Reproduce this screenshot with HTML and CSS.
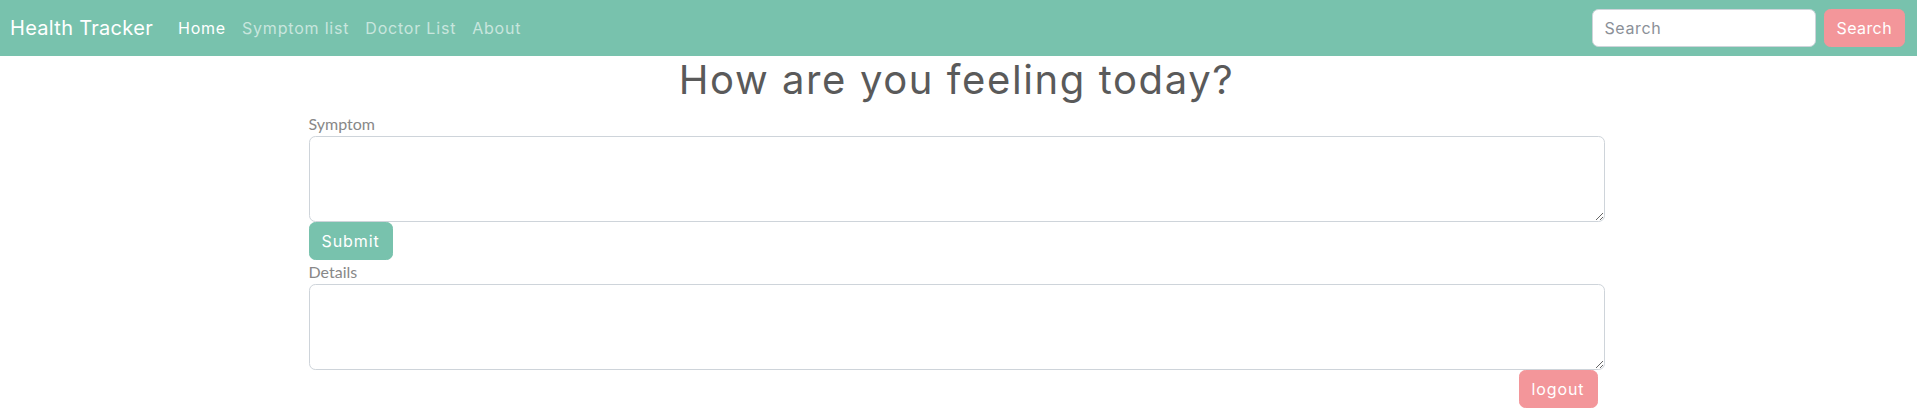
FILE: index.html
```html
<!DOCTYPE html>
<html lang="en">
<head>
<meta charset="utf-8">
<title>Health Tracker</title>
<link rel="stylesheet" href="styles.css">
</head>
<body>
<nav class="navbar">
  <a class="brand" href="#">Health Tracker</a>
  <ul class="nav-links">
    <li><a class="nav-link active" href="#">Home</a></li>
    <li><a class="nav-link" href="#">Symptom list</a></li>
    <li><a class="nav-link" href="#">Doctor List</a></li>
    <li><a class="nav-link" href="#">About</a></li>
  </ul>
  <form class="search-form">
    <input class="search-input" type="search" placeholder="Search">
    <button class="btn btn-secondary btn-search" type="button">Search</button>
  </form>
</nav>
<main class="container">
  <h1 class="title">How are you feeling today?</h1>
  <form class="entry-form">
    <label class="form-label" for="symptom">Symptom</label>
    <textarea class="form-control" id="symptom" rows="3"></textarea>
    <div class="row-start"><button class="btn btn-primary" type="button">Submit</button></div>
    <label class="form-label" for="details">Details</label>
    <textarea class="form-control" id="details" rows="3"></textarea>
    <div class="row-end"><button class="btn btn-secondary" type="button">logout</button></div>
  </form>
</main>
</body>
</html>
```
FILE: styles.css
```css
* { box-sizing: border-box; }

body {
  margin: 0;
  background: #fff;
  color: #888;
  font-family: "Lato", "Noto Sans", sans-serif;
  font-size: 16px;
  line-height: 1.5;
}

.navbar {
  display: flex;
  align-items: center;
  height: 56px;
  padding: 8px 12px 8px 10px;
  background: #78c2ad;
  font-family: "Inter", "Noto Sans", sans-serif;
}

.brand {
  color: #fff;
  font-size: 20px;
  line-height: 30px;
  letter-spacing: 0.3px;
  text-decoration: none;
  margin-right: 17px;
}

.nav-links {
  display: flex;
  list-style: none;
  margin: 0;
  padding: 0;
}

.nav-link {
  display: block;
  padding: 8px;
  font-size: 16px;
  line-height: 24px;
  letter-spacing: 0.8px;
  color: rgba(255, 255, 255, 0.6);
  text-decoration: none;
}

.nav-link.active { color: #fff; }

.search-form {
  display: flex;
  margin-left: auto;
  gap: 8px;
}

.search-input {
  width: 224px;
  height: 38px;
  padding: 6px 12px;
  border: 1px solid #ced4da;
  border-radius: 6.4px;
  font-family: "Inter", "Noto Sans", sans-serif;
  font-size: 16px;
  letter-spacing: 0.6px;
  color: #5a5a5a;
  background: #fff;
  outline: none;
}

.search-input::placeholder { color: #8b9098; }

.btn {
  display: inline-block;
  height: 38px;
  padding: 6px 12px;
  border: 1px solid transparent;
  border-radius: 6.4px;
  font-family: "Inter", "Noto Sans", sans-serif;
  font-size: 16px;
  line-height: 24px;
  letter-spacing: 0.9px;
  color: #fff;
  cursor: pointer;
}

.btn-search { letter-spacing: 0.4px; }

.btn-primary { background: #78c2ad; border-color: #78c2ad; }
.btn-secondary { background: #f3969a; border-color: #f3969a; }

.container {
  width: 1296px;
  margin-left: calc(50% - 650px);
}

.title {
  margin: 0 0 8px;
  font-family: "Inter", "Noto Sans", sans-serif;
  font-weight: 400;
  font-size: 40px;
  line-height: 48px;
  letter-spacing: 1.6px;
  color: #5a5a5a;
  text-align: center;
}

.entry-form {
  display: flex;
  flex-direction: column;
}

.form-label {
  line-height: 24px;
  color: #888;
}

.form-control {
  display: block;
  width: 100%;
  padding: 6px 12px;
  border: 1px solid #ced4da;
  border-radius: 6.4px;
  font-family: inherit;
  font-size: 16px;
  line-height: 24px;
  color: #5a5a5a;
  background: #fff;
  resize: vertical;
}

.row-start { display: flex; }

.row-end {
  display: flex;
  justify-content: flex-end;
  padding-right: 7px;
}
```
